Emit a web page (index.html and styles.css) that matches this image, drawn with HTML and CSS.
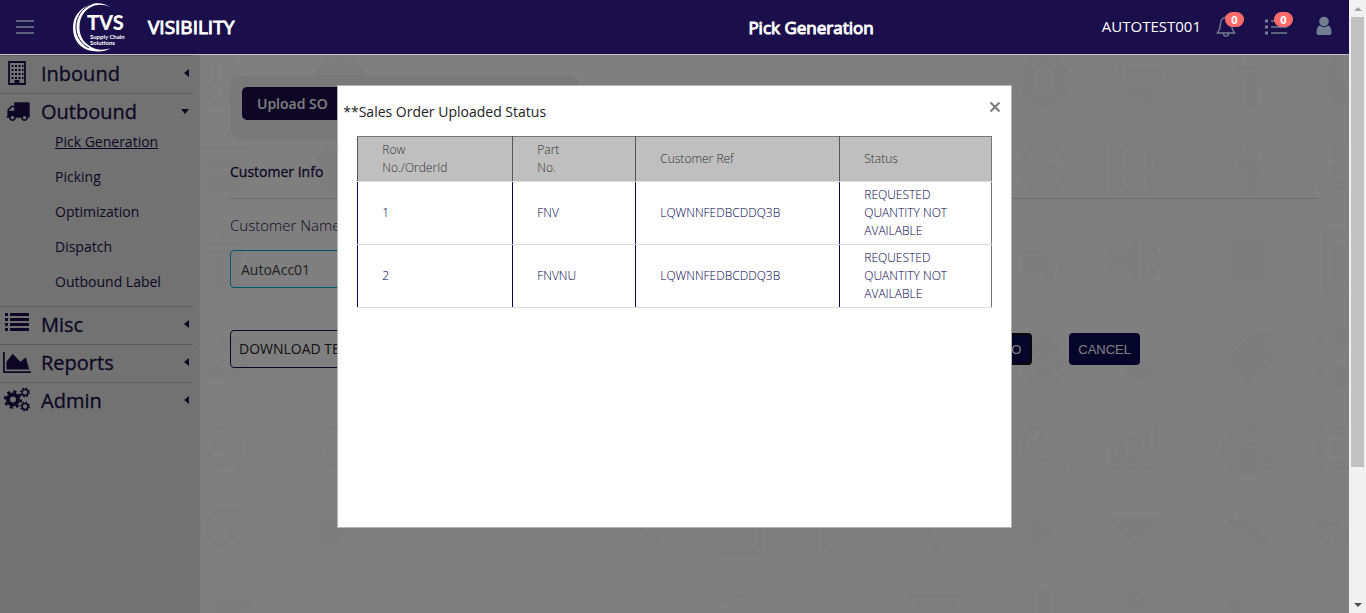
FILE: index.html
```html
<!DOCTYPE html>
<html lang="en">
<head>
<meta charset="utf-8">
<title>Visibility - Pick Generation</title>
<meta name="viewport" content="width=device-width, initial-scale=1">
<link rel="stylesheet" href="styles.css">
</head>
<body>
<div class="frame">
<div class="app">
  <header class="topbar">
    <button class="icon-button menu-button" type="button" aria-label="Toggle menu">
      <svg width="20" height="16" viewBox="0 0 20 16" stroke="#708090" stroke-width="1.4"><path d="M1 2h18M1 8h18M1 14h18"/></svg>
    </button>
    <a class="brand" href="#">
      <svg class="brand-logo" width="56" height="50" viewBox="0 0 56 50" role="img" aria-label="TVS Supply Chain Solutions">
        <path fill="#fff" d="M38 5C33 1 24 0 17 3C7 7 1 15 1 26C1 38 8 47 20 49C27 50 34 49.500 38 46.500C31 48.500 24 48 18.500 44.500C11 40 7 33 7.500 24C8 15 12 8.500 19 5C25 2 32 2 38 5Z"/>
        <path fill="none" stroke="#1b0f4b" stroke-width="1" d="M20 2C10 6 4 15 4 25C4 34 9 42 17 46"/>
        <text x="15" y="28" class="logo-name">TVS</text>
        <text x="18" y="37" class="logo-tag">Supply Chain</text>
        <text x="18" y="43" class="logo-tag">Solutions</text>
      </svg>
      <span class="brand-name">VISIBILITY</span>
    </a>
    <h1 class="page-title">Pick Generation</h1>
    <div class="user-tools">
      <span class="user-name">AUTOTEST001</span>
      <button class="icon-button" type="button" aria-label="Notifications">
        <svg width="20" height="24" viewBox="0 0 20 24" fill="none" stroke="#708090" stroke-width="1.400"><path d="M10 3.500C6 3.500 4.500 7 4.500 10C4.500 15 3 17 1.500 19H18.500C17 17 15.500 15 15.500 10C15.500 7 14 3.500 10 3.500ZM10 3.500V1.500M7.500 19.500C7.500 23 12.500 23 12.500 19.500"/></svg>
        <span class="badge">0</span>
      </button>
      <button class="icon-button" type="button" aria-label="Tasks">
        <svg width="22" height="24" viewBox="0 0 22 24" fill="none" stroke="#708090" stroke-width="1.500"><path d="M6 7h16M6 13h16M6 19h16"/><path stroke-width="3" d="M0 7h3M0 13h3M0 19h3"/></svg>
        <span class="badge">0</span>
      </button>
      <button class="icon-button" type="button" aria-label="Account">
        <svg width="16" height="20" viewBox="0 0 16 20" fill="#708090"><circle cx="8" cy="5.500" r="4.800"/><path d="M3.500 9.500Q8 13 12.500 9.500Q15.500 11 15.500 16.500Q15.500 19 13 19H3Q.5 19 .5 16.500Q.5 11 3.500 9.500Z"/></svg>
      </button>
    </div>
  </header>

  <div class="body">
    <nav class="sidebar" aria-label="Main">
      <ul class="nav-list">
        <li class="nav-item"><a class="nav-link" href="#">
          <svg width="28" height="26" viewBox="0 0 28 26"><path fill="none" stroke="#1b0f4b" stroke-width="1.800" d="M6 2h16v22H6z"/><path fill="none" stroke="#1b0f4b" stroke-width="2" stroke-dasharray="2 1.500" d="M8.500 6h12M8.500 10h12M8.500 14h12M8.500 18h12"/><path fill="#1b0f4b" d="M11.500 20h5v4h-5z"/></svg>
          <span class="nav-text">Inbound</span><span class="caret-left"></span></a></li>
        <li class="nav-item"><a class="nav-link" href="#">
          <svg width="28" height="26" viewBox="-200 -60 2092 1942" fill="#1b0f4b"><path d="M640 1408q0-52-38-90t-90-38-90 38-38 90 38 90 90 38 90-38 38-90zm-384-512h384v-256h-158q-13 0-22 9l-195 195q-9 9-9 22v30zm1280 512q0-52-38-90t-90-38-90 38-38 90 38 90 90 38 90-38 38-90zm256-1088v1024q0 15-4 26.500t-13.500 18.500-16.500 11.500-23.500 6-22.500 2-25.500 0-22.500-.5q0 106-75 181t-181 75-181-75-75-181h-384q0 106-75 181t-181 75-181-75-75-181h-64q-3 0-22.500.5t-25.500 0-22.500-2-23.500-6-16.500-11.500-13.500-18.500-4-26.500q0-26 19-45t45-19v-320q0-8-.5-35t0-38 2.500-34.500 6.500-37 14-30.500 22.500-30l198-198q19-19 50.500-32t58.500-13h160v-192q0-26 19-45t45-19h1024q26 0 45 19t19 45z"/></svg>
          <span class="nav-text">Outbound</span><span class="caret-down"></span></a>
          <ul class="subnav">
            <li><a class="subnav-link current" href="#">Pick Generation</a></li>
            <li><a class="subnav-link" href="#">Picking</a></li>
            <li><a class="subnav-link" href="#">Optimization</a></li>
            <li><a class="subnav-link" href="#">Dispatch</a></li>
            <li><a class="subnav-link" href="#">Outbound Label</a></li>
          </ul></li>
        <li class="nav-item"><a class="nav-link" href="#">
          <svg width="28" height="26" viewBox="0 0 28 26" fill="#1b0f4b"><path d="M2 2h3v3H2zM7 2h19v3H7zM2 7h3v3H2zM7 7h19v3H7zM2 12h3v3H2zM7 12h19v3H7zM2 17h3v3H2zM7 17h19v3H7z"/></svg>
          <span class="nav-text">Misc</span><span class="caret-left"></span></a></li>
        <li class="nav-item"><a class="nav-link" href="#">
          <svg width="28" height="26" viewBox="0 -100 2048 1902" fill="#1b0f4b"><path d="M2048 1536v128h-2048v-1536h128v1408h1920zm-384-1024l256 896h-1664v-576l448-576 576 576z"/></svg>
          <span class="nav-text">Reports</span><span class="caret-left"></span></a></li>
        <li class="nav-item last"><a class="nav-link" href="#">
          <svg width="28" height="26" viewBox="0 0 28 26" fill="none" stroke="#1b0f4b"><circle cx="10" cy="12.500" r="5" stroke-width="4"/><circle cx="10" cy="12.500" r="8" stroke-width="2.400" stroke-dasharray="3.140 3.140"/><circle cx="22" cy="5.500" r="2.900" stroke-width="1.500"/><circle cx="22" cy="5.500" r="4.200" stroke-width="1.600" stroke-dasharray="1.650 1.650"/><circle cx="22" cy="19.500" r="2.900" stroke-width="1.500"/><circle cx="22" cy="19.500" r="4.200" stroke-width="1.600" stroke-dasharray="1.650 1.650"/></svg>
          <span class="nav-text">Admin</span><span class="caret-left"></span></a></li>
      </ul>
    </nav>

    <main class="content">
      <svg class="pattern" width="1149" height="558" viewBox="200 55 1149 558" fill="#fbfbfb" stroke="#fbfbfb" stroke-width="0" aria-hidden="true">
        <path fill-rule="evenodd" d="M208 80h34v25h-34zM212 84v17h26V84zM213 80V68a11 11 0 0 1 23 0v12h-4V68a7 7 0 0 0-15 0v12zM223 88h4v8h-4z"/>
        <path d="M201 146h46v8h-46zM201 158h46v10h-46zM201 172h46v20h-46z"/>
        <path d="M205 242h40v6h-40zM208 250h34l-3 38h-28zM218 235h14v5h-14z"/>
        <path d="M220 340l26-6v38a8 7 0 1 1-4-7v-20l-17 5v22a9 7 0 1 1-5-7z"/>
        <g fill="none" stroke-width="6"><circle cx="222" cy="446" r="17"/><path d="M212 446h18M235 460l11 10"/><circle cx="334" cy="446" r="17"/><path d="M240 513h-18a12 13 0 0 0 0 30h8"/></g>
        <path d="M228 530l14 12-14 12zM320 512l34 20-34 20zM203 597h54l-27 24zM329 591h12v22h-12z"/>
        <circle cx="340" cy="81" r="25"/><circle cx="340" cy="169" r="25"/>
        <path fill-rule="evenodd" d="M1044 56a25 25 0 1 0 .1 0M1035 68h6v26h-6zM1047 68h6v26h-6z"/>
        <g fill="none" stroke-width="4"><path d="M1106 58l12 3 8 33h32M1126 72h34l-5 18h-30M1127 81h32"/><circle cx="1044" cy="168" r="22"/><path stroke-width="5" d="M1044 154v15h15"/><rect x="1112" y="146" width="45" height="45"/><path d="M1121 146v45M1149 146v45M1121 173h28M1112 158h9M1112 169h9M1112 180h9M1149 158h9M1149 169h9M1149 180h9"/></g>
        <circle cx="1127" cy="101" r="5"/><circle cx="1148" cy="101" r="5"/>
        <circle cx="1250" cy="59" r="4"/><path d="M1237 58l4 8h15l7 12-6 10v18h-12V78l-9-12z"/>
        <circle cx="1249" cy="147" r="4"/><path d="M1241 155h16l4 15-5 2v22h-14v-22l-5-2z"/>
        <path d="M1343 58a23 23 0 1 0 6 47V82h-6zM1319 147l9 5-9 5zM1319 164l9 5-9 5zM1319 181l9 5-9 5zM1333 148h16v8h-16zM1333 165h16v8h-16zM1333 182h16v8h-16z"/>
        <path d="M1023 250h20l10-10v43l-10-11h-20zM1108 253h16l14-11v37l-14-12h-16z"/>
        <path fill="none" stroke-width="4" d="M1059 252q7 9 0 18M1143 253q7 8 0 17M1149 246q18 15 0 31M1349 233h-24v57h24M1331 249h18M1331 257h18M1331 265h18M1331 273h18"/>
        <rect x="1228" y="240" width="43" height="43" rx="5"/>
        <path d="M1023 348l20-14 20 14-20 17zM1023 352l14 12-14 14zM1064 352v26l-14-14zM1025 381l19-15 18 15zM1125 368q14-10 30 0-4 10-16 10-10 0-14-10z"/>
        <path fill-rule="evenodd" d="M1226 361l26-27 27-1-1 25-28 24q-5 0-24-21zM1264 344a4 4 0 1 0 8 0 4 4 0 1 0-8 0"/>
        <path fill="none" stroke-width="2" d="M1246 334l-26 27 21 21"/>
        <path d="M1330 328h19v20h-19zM1314 343l10-5v36q-10-2-10-10zM1330 367h19v19h-19z"/>
        <g fill="none" stroke-width="6"><circle cx="1041" cy="445" r="17"/><path stroke-width="4" d="M1032 445h18M1041 436v18"/><path d="M1055 459l11 11"/></g>
        <path fill-rule="evenodd" d="M1111 444h13v26h-13zM1115 448v9h6v-9zM1128 438h13v32h-13zM1132 442v13h6v-13zM1145 426h13v44h-13zM1149 430v20h6v-20z"/>
        <circle cx="1249" cy="431" r="8"/><circle cx="1235" cy="439" r="6"/><circle cx="1263" cy="439" r="6"/><circle cx="1225" cy="443" r="4"/><circle cx="1274" cy="443" r="4"/>
        <path d="M1237 446q12-10 24 0v27h-24zM1226 449h9v21h-9zM1264 449h9v21h-9zM1219 453h5v12h-5zM1275 453h5v12h-5zM1316 424l9 6-9 6zM1316 443l9 6-9 6zM1316 460l9 6-9 6zM1332 426h17v8h-17zM1332 445h17v8h-17zM1332 462h17v8h-17z"/>
        <path d="M1028 512l30 20-30 20zM1109 519h51l-25 26zM1316 525l12-12v8q14 0 21 20l-10-8h-8l-2 10 6 7-18-12 9-9z"/>
        <path fill-rule="evenodd" d="M1236 511q11 0 11 12l24 22q1 8-7 8l-23-24q-11 1-13-11l7 4 6-5zM1264 549a2 2 0 1 0 4 0 2 2 0 1 0-4 0"/>
        <path d="M1037 591h13v22h-13zM1227 606l20-13v20h-20z"/><circle cx="1134" cy="602" r="11"/>
        <path fill="none" stroke-width="5" d="M610 540l20-14 30 14M718 520v31h42v-31M825 528v22h20v-22M925 530l15 12-8 8M715 604q22-18 44 0M910 597h52l-26 16z"/>
      </svg>

      <div class="page">
        <section class="upload-panel">
          <button class="upload-button" type="button">Upload SO</button>
        </section>
        <h2 class="section-title">Customer Info</h2>
        <form class="customer-form">
          <label class="field-label" for="customer">Customer Name</label>
          <input class="field-input" id="customer" type="text" value="AutoAcc01">
          <div class="actions">
            <button class="template-button" type="button">DOWNLOAD TEMPLATE</button>
            <div class="action-group">
              <button class="action-button focused" type="button">UPLOAD SO</button>
              <button class="action-button" type="button">CANCEL</button>
            </div>
          </div>
        </form>
      </div>
    </main>
  </div>

  <div class="overlay">
    <section class="dialog" role="dialog" aria-modal="true" aria-labelledby="dialog-title">
      <div class="dialog-head">
        <h2 class="dialog-title" id="dialog-title">**Sales Order Uploaded Status</h2>
        <button class="icon-button close-button" type="button" aria-label="Close">
          <svg width="12" height="12" viewBox="0 0 12 12" stroke="#7f7f7f" stroke-width="2.200"><path d="M1.500 1.500l9 9M10.500 1.500l-9 9"/></svg>
        </button>
      </div>
      <table class="status-table">
        <colgroup><col class="col-row"><col class="col-part"><col class="col-ref"><col class="col-status"></colgroup>
        <thead><tr><th scope="col">Row<br>No./OrderId</th><th scope="col">Part<br>No.</th><th scope="col">Customer Ref</th><th scope="col">Status</th></tr></thead>
        <tbody>
          <tr><td>1</td><td>FNV</td><td>LQWNNFEDBCDDQ3B</td><td>REQUESTED QUANTITY NOT AVAILABLE</td></tr>
          <tr><td>2</td><td>FNVNU</td><td>LQWNNFEDBCDDQ3B</td><td>REQUESTED QUANTITY NOT AVAILABLE</td></tr>
        </tbody>
      </table>
    </section>
  </div>
</div>
<div class="scrollbar" aria-hidden="true"><span class="scroll-up"></span><span class="scroll-thumb"></span><span class="scroll-down"></span></div>
</div>
</body>
</html>
```
FILE: styles.css
```css
* { box-sizing: border-box; }

body {
  margin: 0;
  font-family: "Open Sans", "Noto Sans", sans-serif;
  font-size: 14px;
  color: #1b0f4b;
}

h1, h2, ul { margin: 0; padding: 0; }
ul { list-style: none; }
a { color: inherit; text-decoration: none; }
button, input { font-family: inherit; }

.frame { display: flex; height: 100vh; }
.app { position: relative; flex: 1; min-width: 0; display: flex; flex-direction: column; overflow: hidden; }

/* Top bar */
.topbar {
  position: relative;
  z-index: 2;
  display: flex;
  align-items: center;
  height: 55px;
  padding: 0 17px 0 15px;
  background: #1b0f4b;
  border-bottom: 1px solid #c4c4cc;
  color: #fff;
}
.icon-button {
  position: relative;
  display: flex;
  padding: 0;
  border: 0;
  background: none;
  cursor: pointer;
}
.brand { display: flex; align-items: center; gap: 20px; margin-left: 37px; }
.logo-name { font: 900 20px Lato, sans-serif; fill: #fff; }
.logo-tag { font: 700 6px Lato, sans-serif; fill: #fff; }
.brand-name { font-size: 19px; -webkit-text-stroke: 1px #fff; }
.page-title { flex: 1; padding-left: 286px; text-align: center; font-size: 17px; font-weight: 400; -webkit-text-stroke: 1px #fff; }
.user-tools { display: flex; align-items: center; }
.user-name { font-size: 15px; line-height: 20px; margin-right: 15px; padding-bottom: 3px; }
.user-tools .icon-button + .icon-button { margin-left: 29px; }
.user-tools .icon-button { margin-bottom: 3px; }
.badge {
  position: absolute;
  top: -2px;
  left: 9px;
  width: 19px;
  border-radius: 8px;
  background: #ff6b6b;
  color: #fff;
  font-size: 11px;
  font-weight: 700;
  line-height: 15px;
  text-align: center;
}

/* Sidebar */
.body { flex: 1; display: flex; min-height: 0; }
.sidebar { width: 200px; flex: none; padding-right: 7px; background: #e4e4e4; }
.nav-list { border-top: 1px solid #bbb; }
.nav-item { border-bottom: 1px solid #bbb; }
.nav-item.last { border-bottom: 0; }
.nav-link { display: flex; align-items: center; gap: 10px; height: 37px; padding: 0 4px 3px 3px; }
.nav-text { flex: 1; font-size: 20px; -webkit-text-stroke: 0.3px #1b0f4b; }
.caret-left { border: 4px solid transparent; border-right: 5px solid #1b0f4b; border-left: 0; }
.caret-down { border: 4px solid transparent; border-top: 5px solid #1b0f4b; border-bottom: 0; }
.subnav-link { display: block; padding: 0 0 13px 55px; line-height: 22px; }
.current { text-decoration: underline; }

/* Page content */
.content { position: relative; flex: 1; min-width: 0; overflow: hidden; background: #fff; }
.pattern { position: absolute; top: 0; left: 0; }
.page { position: relative; padding: 20px 30px; }
.upload-panel { width: 350px; padding: 12px; border-radius: 12px; background: #f3f3f3; height: 64px; }
.upload-button {
  height: 33px;
  padding: 0 15px;
  border: 0;
  border-radius: 5px;
  background: #1b0f4b;
  color: #fff;
  font-size: 14px;
  font-weight: 600;
}
.section-title {
  padding: 22px 0 15px;
  border-bottom: 1px solid #ddd;
  font-size: 14px;
  font-weight: 400;
  line-height: 22px;
  -webkit-text-stroke: 0.3px #1b0f4b;
}
.customer-form { display: flex; flex-direction: column; padding-top: 15px; }
.field-label { font-size: 15px; font-weight: 300; line-height: 22px; }
.field-input {
  width: 260px;
  height: 38px;
  margin-top: 14px;
  padding: 0 10px;
  border: 1px solid #00b0d8;
  border-radius: 4px;
  background: transparent;
  color: #444;
  font-size: 14px;
}
.actions { display: flex; align-items: center; justify-content: space-between; margin-top: 42px; padding-right: 179px; }
.template-button {
  height: 38px;
  padding: 0 8px 2px;
  border: 1px solid #1b0f4b;
  border-radius: 4px;
  background: transparent;
  color: #222;
  font-size: 14px;
}
.action-group { display: flex; gap: 37px; }
.action-button {
  height: 32px;
  padding: 0 9px;
  border: 0;
  border-radius: 4px;
  background: #0a0a55;
  color: #fff;
  font-family: "Liberation Sans", Arial, sans-serif;
  font-size: 13px;
}
.action-button.focused { border: 2px solid #101010; }

/* Dialog */
.overlay {
  position: absolute;
  inset: 0;
  z-index: 1;
  display: flex;
  align-items: center;
  justify-content: center;
  background: rgba(0, 0, 0, 0.5);
}
.dialog { width: 50%; min-height: calc(72vh + 2px); padding: 0 19px; border: 1px solid #b4b4b4; background: #fff; }
.dialog-head { display: flex; justify-content: space-between; align-items: flex-start; margin: 0 -9px 0 -14px; padding: 15px 0 13px; }
.dialog-title { font-size: 14px; font-weight: 400; line-height: 22px; color: #222; }
.status-table { width: 100%; table-layout: fixed; border-collapse: collapse; font-size: 12px; line-height: 18px; }
.col-row { width: 155px; }
.col-part { width: 123px; }
.col-ref { width: 204px; }
.status-table th, .status-table td {
  padding: 4px 24px;
  border-right: 1px solid #0a0a55;
  border-left: 1px solid #0a0a55;
  border-bottom: 1px solid #ddd;
  text-align: left;
  font-weight: 300;
}
.status-table th { border-color: #555; border-bottom-color: #ddd; border-top: 1px solid #777; background: #bfbfbf; color: #333; }
.status-table td { color: #00004d; }
.status-table th:last-child, .status-table td:last-child { border-right-color: #777; }
.close-button { padding: 0; }

/* Scroll track */
.scrollbar { width: 17px; flex: none; display: flex; flex-direction: column; align-items: center; padding: 7px 0 6px; background: #f1f1f1; }
.scroll-up { border: 4px solid transparent; border-bottom-color: #a3a3a3; border-top: 0; }
.scroll-down { margin-top: auto; border: 4px solid transparent; border-top-color: #505050; border-bottom: 0; }
.scroll-thumb { width: 13px; height: 75%; margin-top: 6px; background: #c1c1c1; }
```
